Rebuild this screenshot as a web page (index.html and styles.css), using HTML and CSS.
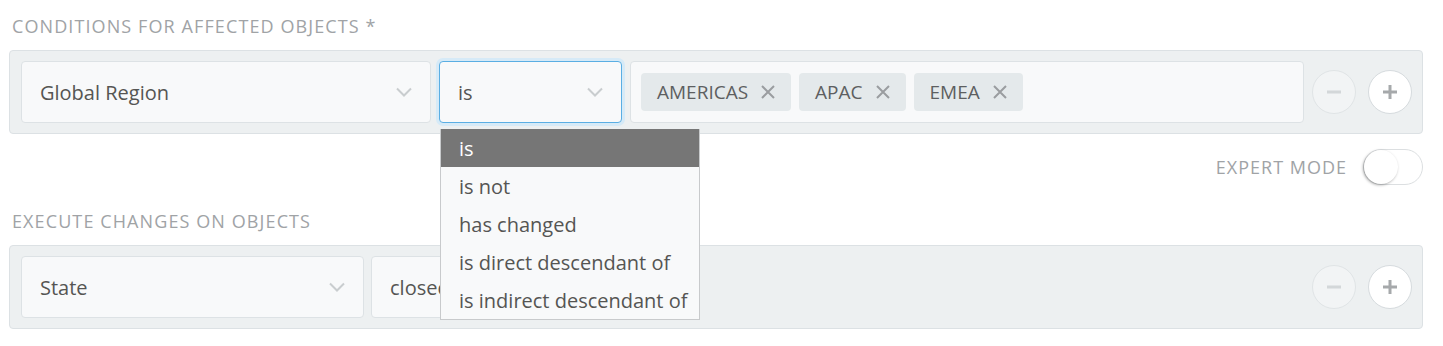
FILE: index.html
```html
<!DOCTYPE html>
<html>
<head>
  <title>Conditions</title>
  <link rel="stylesheet" href="styles.css">
</head>
<body>
  <div class="page">
    <div class="section-label">Conditions for affected objects *</div>

    <div class="panel">
      <div class="select wide">
        <span>Global Region</span>
        <svg class="chevron" viewBox="0 0 16 10"><path d="M1 1.5 L8 8.5 L15 1.5"/></svg>
      </div>
      <div class="select-wrap">
        <div class="select narrow focused">
          <span>is</span>
          <svg class="chevron" viewBox="0 0 16 10"><path d="M1 1.5 L8 8.5 L15 1.5"/></svg>
        </div>
        <ul class="dropdown">
          <li class="active">is</li>
          <li>is not</li>
          <li>has changed</li>
          <li>is direct descendant of</li>
          <li>is indirect descendant of</li>
        </ul>
      </div>
      <div class="tags">
        <span class="tag">AMERICAS <svg viewBox="0 0 14 14"><path d="M1 1 L13 13 M13 1 L1 13"/></svg></span>
        <span class="tag">APAC <svg viewBox="0 0 14 14"><path d="M1 1 L13 13 M13 1 L1 13"/></svg></span>
        <span class="tag">EMEA <svg viewBox="0 0 14 14"><path d="M1 1 L13 13 M13 1 L1 13"/></svg></span>
      </div>
      <div class="round minus"><svg viewBox="0 0 16 16"><path d="M1 8 H15"/></svg></div>
      <div class="round plus"><svg viewBox="0 0 16 16"><path d="M1 8 H15 M8 1 V15"/></svg></div>
    </div>

    <div class="expert">
      <span>Expert mode</span>
      <div class="toggle"><div class="knob"></div></div>
    </div>

    <div class="section-label">Execute changes on objects</div>

    <div class="panel">
      <div class="select state">
        <span>State</span>
        <svg class="chevron" viewBox="0 0 16 10"><path d="M1 1.5 L8 8.5 L15 1.5"/></svg>
      </div>
      <div class="select value">
        <span>closed</span>
      </div>
      <div class="spacer"></div>
      <div class="round minus"><svg viewBox="0 0 16 16"><path d="M1 8 H15"/></svg></div>
      <div class="round plus"><svg viewBox="0 0 16 16"><path d="M1 8 H15 M8 1 V15"/></svg></div>
    </div>
  </div>
</body>
</html>
```

FILE: styles.css
```css
body {
  margin: 0;
  background-color: #FFF;
  font-family: "Open Sans", "Noto Sans", sans-serif;
  color: #555553;
}

.page {
  padding: 14px 20px 0 9px;
}

.section-label {
  padding-left: 3px;
  height: 36px;
  line-height: 24px;
  font-size: 18px;
  letter-spacing: 1.1px;
  text-transform: uppercase;
  color: #A0A3A6;
}

.panel {
  display: flex;
  align-items: center;
  gap: 8px;
  padding: 10px 10px 10px 11px;
  background-color: #EDF0F1;
  border: 1px solid #DCE1E4;
  border-radius: 4px;
}

.select {
  box-sizing: border-box;
  height: 62px;
  display: flex;
  align-items: center;
  justify-content: space-between;
  padding: 0 18px;
  background-color: #F8F9FA;
  border: 1px solid #DDE2E5;
  border-radius: 4px;
  font-size: 20px;
  font-weight: 500;
}

.select.wide {
  width: 410px;
}

.select-wrap {
  position: relative;
}

.select.narrow {
  width: 183px;
}

.select.focused {
  border-color: #5AAEE3;
  box-shadow: 0 0 0 3px #D6EAF7;
}

.select.state {
  width: 343px;
  margin-right: -1px;
}

.select.value {
  width: 250px;
}

.chevron {
  width: 16px;
  height: 10px;
  fill: none;
  stroke: #C9CDCF;
  stroke-width: 2;
}

.tags {
  flex: 1;
  box-sizing: border-box;
  height: 62px;
  display: flex;
  align-items: center;
  gap: 8px;
  padding: 0 10px;
  background-color: #F8F9FA;
  border: 1px solid #DDE2E5;
  border-radius: 4px;
}

.tag {
  height: 38px;
  display: flex;
  align-items: center;
  gap: 13px;
  padding: 0 16px;
  background-color: #E4E9EB;
  border-radius: 4px;
  font-size: 19px;
  font-weight: 500;
  color: #5D5F61;
}

.tag svg {
  width: 14px;
  height: 14px;
  stroke: #9A9DA0;
  stroke-width: 2;
}

.spacer {
  flex: 1;
}

.round {
  box-sizing: border-box;
  width: 44px;
  height: 44px;
  border-radius: 50%;
  display: flex;
  align-items: center;
  justify-content: center;
}

.round svg {
  width: 16px;
  height: 16px;
  stroke-width: 3;
}

.round.minus {
  background-color: #F2F4F5;
  border: 1px solid #E0E4E6;
}

.round.minus svg {
  stroke: #D3D7D9;
}

.round.plus {
  margin-left: 4px;
  background-color: #FFF;
  border: 1px solid #D6DBDE;
}

.round.plus svg {
  stroke: #A6A9AB;
}

.dropdown {
  position: absolute;
  top: 68px;
  left: 1px;
  z-index: 2;
  width: 258px;
  margin: 0;
  padding: 0;
  list-style: none;
  background-color: #F8F9FA;
  border: 1px solid #C8CACC;
  border-top: none;
  font-size: 20px;
  font-weight: 500;
  white-space: nowrap;
}

.dropdown li {
  height: 38px;
  line-height: 39px;
  padding-left: 18px;
}

.dropdown li.active {
  background-color: #767676;
  color: #FFF;
}

.expert {
  display: flex;
  justify-content: flex-end;
  align-items: center;
  gap: 16px;
  height: 36px;
  margin: 15px 0 24px;
}

.expert span {
  font-size: 18px;
  letter-spacing: 1px;
  text-transform: uppercase;
  color: #A0A3A6;
}

.toggle {
  box-sizing: border-box;
  width: 60px;
  height: 36px;
  border: 1px solid #DCDFE1;
  border-radius: 18px;
  background-color: #FFF;
}

.knob {
  width: 34px;
  height: 34px;
  border-radius: 50%;
  background-color: #FFF;
  box-shadow: -1px 1px 3px rgba(0, 0, 0, 0.35);
}
```
